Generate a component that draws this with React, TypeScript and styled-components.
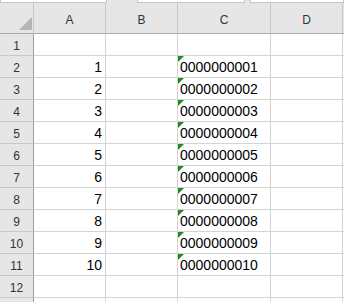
import React from "react";
import styled, { createGlobalStyle } from "styled-components";

const GlobalStyle = createGlobalStyle`
  html, body {
    margin: 0;
    padding: 0;
    background: #ffffff;
    overflow: hidden;
  }
`;

const Wrapper = styled.div`
  width: 344px;
  height: 302px;
  overflow: hidden;
  background: #e6e6e6;
  font-family: "Liberation Sans", Arial, sans-serif;
`;

const TopStrip = styled.div`
  display: flex;
  height: 3px;
  background: #e6e6e6;
`;

const StripBox = styled.div<{ $width: number; $gap?: number }>`
  width: ${(p) => p.$width}px;
  margin-right: ${(p) => p.$gap ?? 0}px;
  flex: none;
  background: #ffffff;
  border: 1px solid #c6c6c6;
  border-top: none;
  box-sizing: border-box;
`;

const Sheet = styled.div`
  display: grid;
  grid-template-columns: 34px 72px 72px 93px 72px 40px;
  grid-template-rows: 31px;
  grid-auto-rows: 22px;
  background: #ffffff;
`;

const Corner = styled.div`
  position: relative;
  background: #e6e6e6;
  border-right: 1px solid #c8c8c8;
  border-bottom: 1px solid #ababab;
  box-sizing: border-box;
`;

const CornerMark = styled.div`
  position: absolute;
  right: 1px;
  bottom: 3px;
  width: 0;
  height: 0;
  border-left: 13px solid transparent;
  border-bottom: 13px solid #b4b4b4;
`;

const ColHeader = styled.div`
  display: flex;
  align-items: center;
  justify-content: center;
  padding-top: 3px;
  background: #e6e6e6;
  border-right: 1px solid #c8c8c8;
  border-bottom: 1px solid #ababab;
  box-sizing: border-box;
  font-size: 12px;
  color: #333333;
`;

const RowHeader = styled.div`
  display: flex;
  align-items: center;
  justify-content: center;
  padding-top: 2px;
  background: #e6e6e6;
  border-right: 1px solid #9e9e9e;
  border-bottom: 1px solid #c8c8c8;
  box-sizing: border-box;
  font-size: 12px;
  color: #333333;
`;

const Cell = styled.div<{ $align?: "left" | "right" }>`
  position: relative;
  display: flex;
  align-items: flex-end;
  justify-content: ${(p) => (p.$align === "right" ? "flex-end" : "flex-start")};
  padding: 0 3px 2px 2px;
  border-right: 1px solid #d4d4d4;
  border-bottom: 1px solid #d4d4d4;
  box-sizing: border-box;
  font-size: 14px;
  line-height: 16px;
  color: #000000;
  white-space: nowrap;
`;

const TextFlag = styled.div`
  position: absolute;
  left: 0;
  top: 0;
  width: 0;
  height: 0;
  border-top: 6px solid #1f8a1f;
  border-right: 6px solid transparent;
`;

const columns = ["A", "B", "C", "D", ""];
const rows = Array.from({ length: 13 }, (_, i) => i + 1);

export default function App() {
  return (
    <>
      <GlobalStyle />
      <Wrapper>
        <TopStrip>
          <StripBox $width={107} $gap={30} />
          <StripBox $width={108} $gap={5} />
          <StripBox $width={94} />
        </TopStrip>
        <Sheet>
          <Corner>
            <CornerMark />
          </Corner>
          {columns.map((c, i) => (
            <ColHeader key={i}>{c}</ColHeader>
          ))}
          {rows.map((r) => {
            const n = r - 1;
            const hasData = n >= 1 && n <= 10;
            return (
              <React.Fragment key={r}>
                {/* row 13 lies past the bottom edge, so its label is left out */}
                <RowHeader>{r < 13 ? r : ""}</RowHeader>
                <Cell $align="right">{hasData ? n : ""}</Cell>
                <Cell />
                <Cell>
                  {hasData && <TextFlag />}
                  {hasData ? String(n).padStart(10, "0") : ""}
                </Cell>
                <Cell />
                <Cell />
              </React.Fragment>
            );
          })}
        </Sheet>
      </Wrapper>
    </>
  );
}
